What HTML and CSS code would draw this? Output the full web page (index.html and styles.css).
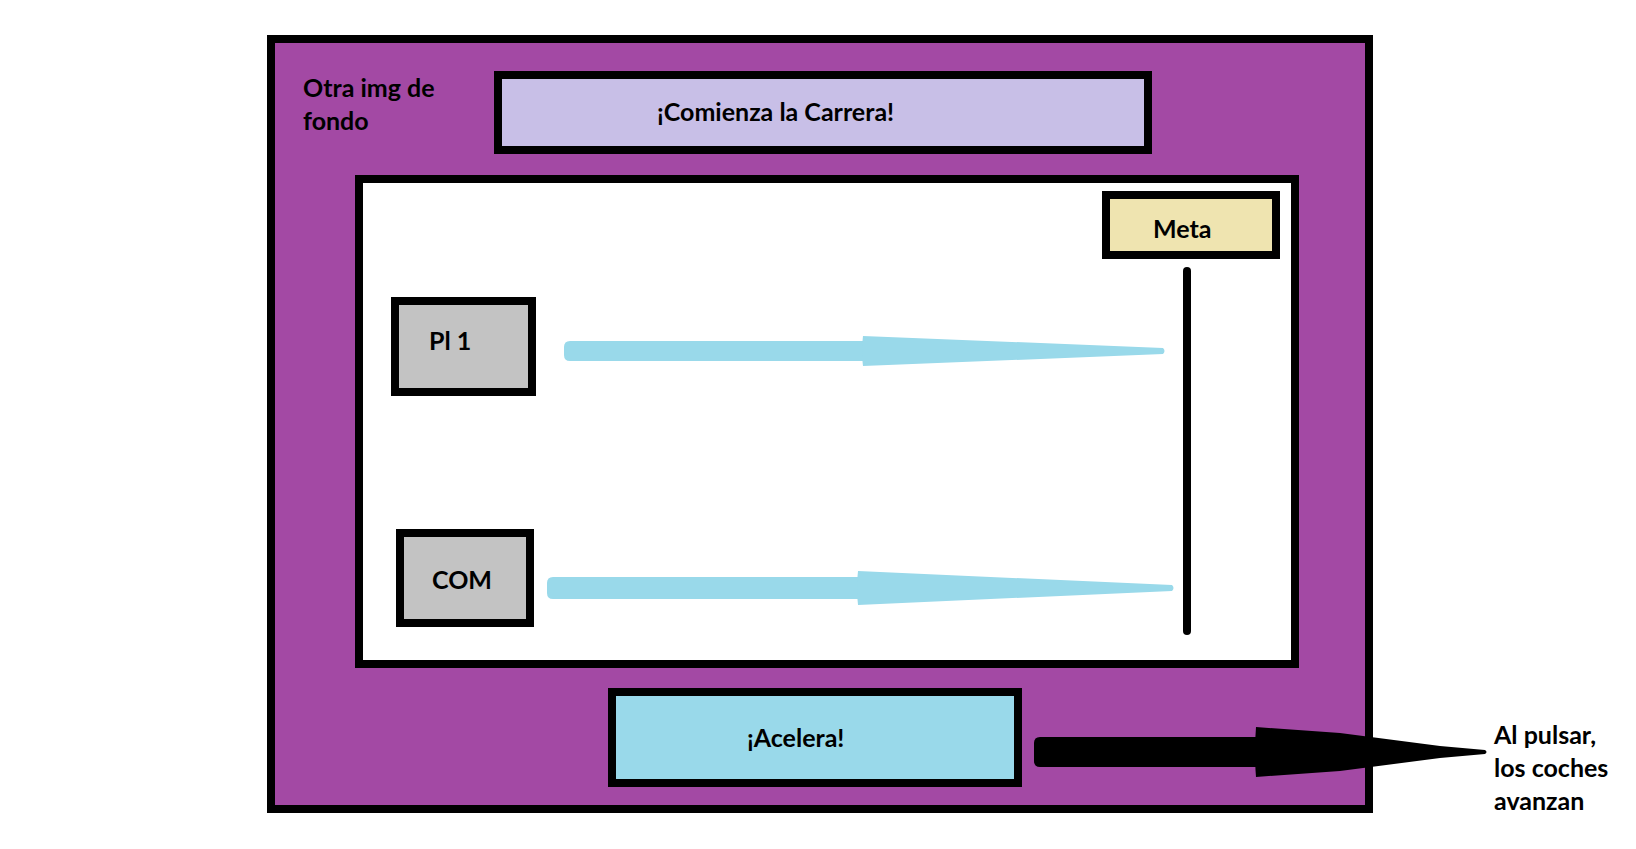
FILE: index.html
```html
<!DOCTYPE html>
<html lang="es">
<head>
    <meta charset="UTF-8">
    <meta name="viewport" content="width=device-width, initial-scale=1.0">
    <title>Carrera</title>
    <link rel="stylesheet" href="styles.css">
</head>
<body>
    <div class="stage">
        <div class="race-board">
            <div class="top-row">
                <p class="bg-note">Otra img de<br>fondo</p>
                <div class="title-box">¡Comienza la Carrera!</div>
            </div>

            <div class="track">
                <div class="goal-box">Meta</div>
                <div class="track-body">
                    <div class="lanes">
                        <div class="lane lane-player">
                            <div class="car-box">Pl 1</div>
                            <!-- Player progress arrow -->
                            <svg class="lane-arrow" width="602" height="36" viewBox="0 0 602 36">
                                <path d="M6 8 H300 V28 H6 Q0 28 0 22 V14 Q0 8 6 8 Z" fill="#99d9ea"/>
                                <path d="M299 3 Q297 18 299 33 L599 21 Q602 18 599 15 Z" fill="#99d9ea"/>
                            </svg>
                        </div>
                        <div class="lane lane-com">
                            <div class="car-box">COM</div>
                            <!-- Computer progress arrow -->
                            <svg class="lane-arrow" width="628" height="36" viewBox="0 0 628 36">
                                <path d="M6 7 H312 V29 H6 Q0 29 0 23 V13 Q0 7 6 7 Z" fill="#99d9ea"/>
                                <path d="M311 1 Q309 18 311 35 L625 21 Q628 18 625 15 Z" fill="#99d9ea"/>
                            </svg>
                        </div>
                    </div>
                    <div class="finish-line"></div>
                </div>
            </div>

            <button type="button" class="speed-btn">¡Acelera!</button>
        </div>

        <!-- Annotation arrow, drawn over the board edge -->
        <svg class="note-arrow" width="455" height="52" viewBox="0 0 455 52">
            <path d="M6 11 H224 V41 H6 Q0 41 0 35 V17 Q0 11 6 11 Z" fill="#000"/>
            <path d="M222 1 Q220 26 222 51 L306 45 L406 32 L451 28 Q454 26 451 24 L406 20 L306 7 Z" fill="#000"/>
        </svg>

        <p class="side-note">Al pulsar,<br>los coches<br>avanzan</p>
    </div>
</body>
</html>
```

FILE: styles.css
```css
html, body {
    margin: 0;
    background: #fff;
    font-family: Lato, "Open Sans", sans-serif;
    font-weight: 700;
    font-size: 25px;
    color: #000;
}

.stage {
    position: relative;
    display: flex;
    align-items: flex-start;
    padding: 35px 0 0 267px;
    height: 849px;
    box-sizing: border-box;
}

.race-board {
    width: 1106px;
    height: 778px;
    box-sizing: border-box;
    border: 8px solid #000;
    background: #a349a4; /* paint purple */
    display: flex;
    flex-direction: column;
}

.top-row {
    display: flex;
    align-items: flex-start;
    padding-top: 28px;
}

.bg-note {
    width: 191px;
    margin: 0 0 0 28px;
    line-height: 33px;
    white-space: nowrap;
}

.title-box {
    width: 658px;
    height: 83px;
    box-sizing: border-box;
    border: 8px solid #000;
    background: #c8bfe7;
    display: flex;
    align-items: center;
    padding: 0 0 2px 155px;
    line-height: 31px;
}

.track {
    width: 944px;
    height: 493px;
    box-sizing: border-box;
    margin: 21px 0 0 80px;
    border: 8px solid #000;
    background: #fff;
    display: flex;
    flex-direction: column;
}

.goal-box {
    align-self: flex-end;
    width: 178px;
    height: 68px;
    box-sizing: border-box;
    margin: 8px 11px 0 0;
    border: 8px solid #000;
    background: #efe4b0;
    padding: 14px 0 0 43px;
    line-height: 31px;
}

.track-body {
    display: flex;
    margin-top: 8px;
}

.lanes {
    flex: 1;
}

.lane {
    display: flex;
    align-items: flex-start;
}

.lane-player {
    margin-top: 30px;
}

.lane-com {
    margin-top: 133px;
}

.car-box {
    box-sizing: border-box;
    border: 8px solid #000;
    background: #c3c3c3;
    line-height: 31px;
}

.lane-player .car-box {
    width: 145px;
    height: 99px;
    margin-left: 28px;
    padding: 20px 0 0 30px;
}

.lane-com .car-box {
    width: 138px;
    height: 98px;
    margin-left: 33px;
    padding: 27px 0 0 28px;
}

.lane-arrow {
    display: block;
}

.lane-player .lane-arrow {
    margin: 36px 0 0 28px;
}

.lane-com .lane-arrow {
    margin: 41px 0 0 13px;
}

.finish-line {
    width: 8px;
    height: 368px;
    border-radius: 4px;
    background: #000;
    margin-right: 100px;
}

.speed-btn {
    width: 414px;
    height: 99px;
    box-sizing: border-box;
    margin: 20px 0 0 333px;
    border: 8px solid #000;
    background: #99d9ea;
    display: flex;
    align-items: center;
    padding: 0 0 0 131px;
    font: inherit;
    line-height: 31px;
    color: #000;
    cursor: pointer;
}

.note-arrow {
    position: absolute;
    left: 1034px;
    top: 726px;
}

.side-note {
    margin: 683px 0 0 121px;
    line-height: 33px;
    white-space: nowrap;
}
```
